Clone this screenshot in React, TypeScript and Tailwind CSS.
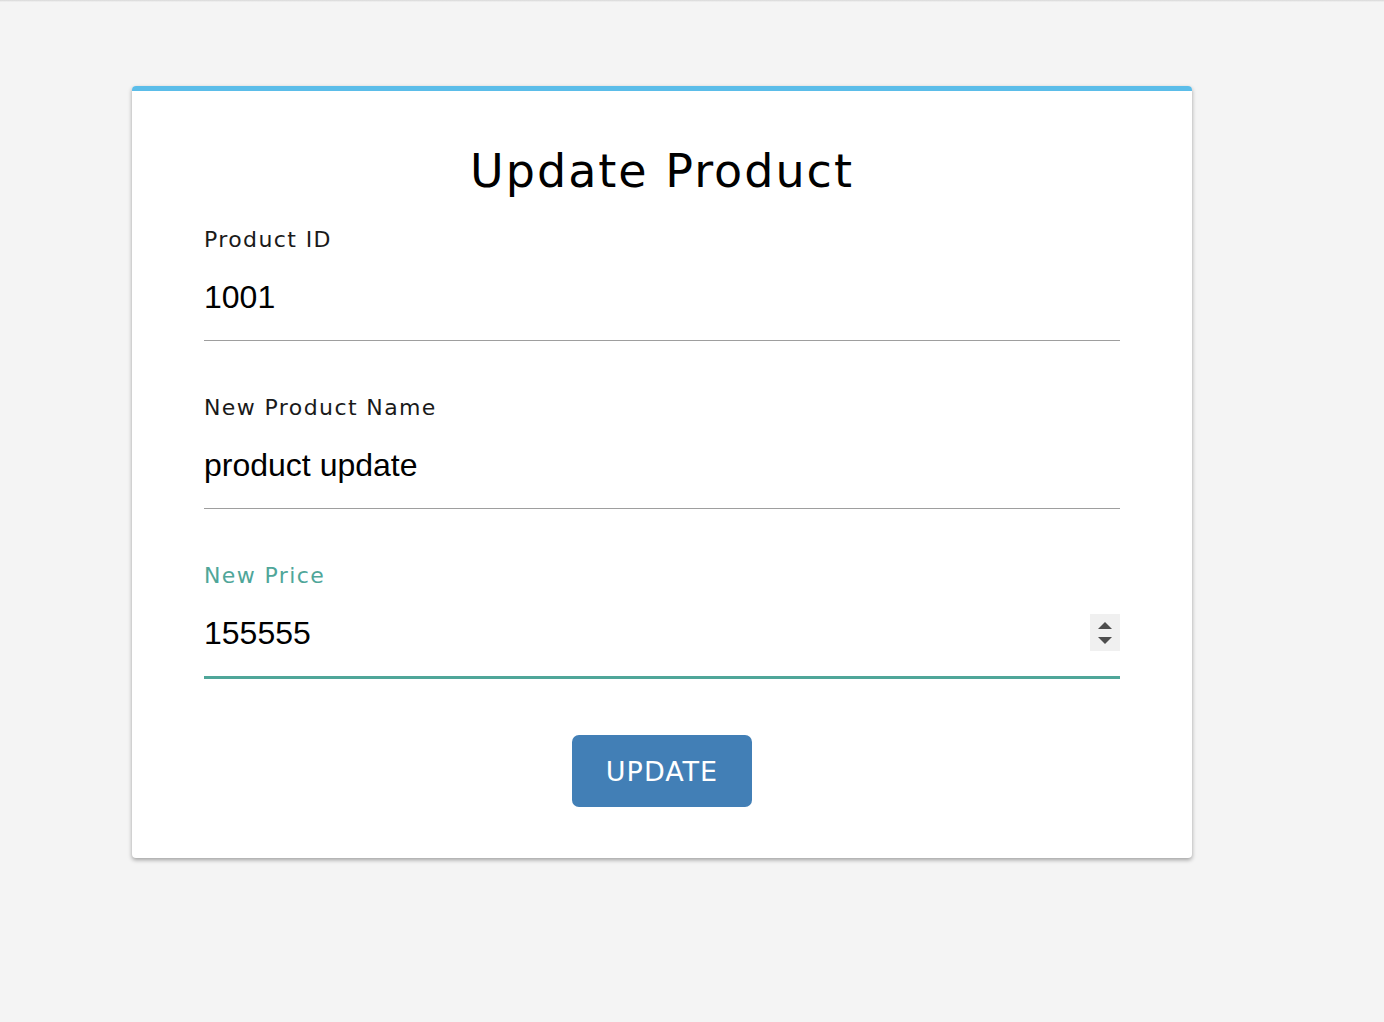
import { useState } from 'react'

const labelFont = "font-['DejaVu_Sans',sans-serif]"

function Field({
  label,
  value,
  focused,
  spinner,
  onChange,
}: {
  label: string
  value: string
  focused?: boolean
  spinner?: boolean
  onChange: (v: string) => void
}) {
  return (
    <div className="flex flex-col">
      <label
        className={`${labelFont} h-[28px] leading-[30px] text-[22px] tracking-[1.4px] ${
          focused ? 'text-[#4fa699]' : 'text-[#1a1a1a]'
        }`}
      >
        {label}
      </label>
      <div
        className={`flex h-[88px] items-center ${
          focused ? 'h-[90px] border-b-[3px] border-[#4fa699]' : 'border-b border-[#9e9e9e]'
        }`}
      >
        <input
          value={value}
          onChange={(e) => onChange(e.target.value)}
          className="flex-1 bg-transparent font-['Liberation_Sans',Arial,sans-serif] text-[32px] text-black outline-none"
        />
        {spinner && (
          <div className="flex h-[37px] w-[30px] flex-col items-center justify-center gap-[8px] bg-[#f0f0f0]">
            <svg width="14" height="7" viewBox="0 0 14 7" aria-hidden="true">
              <polygon points="7,0 14,7 0,7" fill="#4d4d4d" />
            </svg>
            <svg width="14" height="7" viewBox="0 0 14 7" aria-hidden="true">
              <polygon points="0,0 14,0 7,7" fill="#4d4d4d" />
            </svg>
          </div>
        )}
      </div>
    </div>
  )
}

export default function App() {
  const [id, setId] = useState('1001')
  const [name, setName] = useState('product update')
  const [price, setPrice] = useState('155555')

  return (
    <div className="min-h-[1022px] bg-[#f4f4f4]">
      <div className="h-[2px] bg-gradient-to-b from-[#d6d6d6] to-[#f4f4f4]" />
      <div className="pl-[132px] pt-[84px]">
        <div className="w-[1060px] overflow-hidden rounded-[4px] bg-white shadow-[0_2px_4px_rgba(0,0,0,0.35)]">
          <div className="h-[5px] bg-[#5bbde9]" />
          <div className="px-[72px] pb-[51px]">
            <h1
              className={`${labelFont} pt-[46px] pb-[20px] text-center text-[46px] leading-[68px] tracking-[2px] font-normal text-black`}
            >
              Update Product
            </h1>
            <div className="flex flex-col gap-[52px]">
              <Field label="Product ID" value={id} onChange={setId} />
              <Field label="New Product Name" value={name} onChange={setName} />
              <Field label="New Price" value={price} onChange={setPrice} focused spinner />
            </div>
            <div className="mt-[56px] flex justify-center">
              <button
                type="button"
                className={`${labelFont} h-[72px] w-[180px] rounded-[7px] bg-[#427fb6] pt-[3px] text-[27px] tracking-[1px] text-white`}
              >
                UPDATE
              </button>
            </div>
          </div>
        </div>
      </div>
    </div>
  )
}
